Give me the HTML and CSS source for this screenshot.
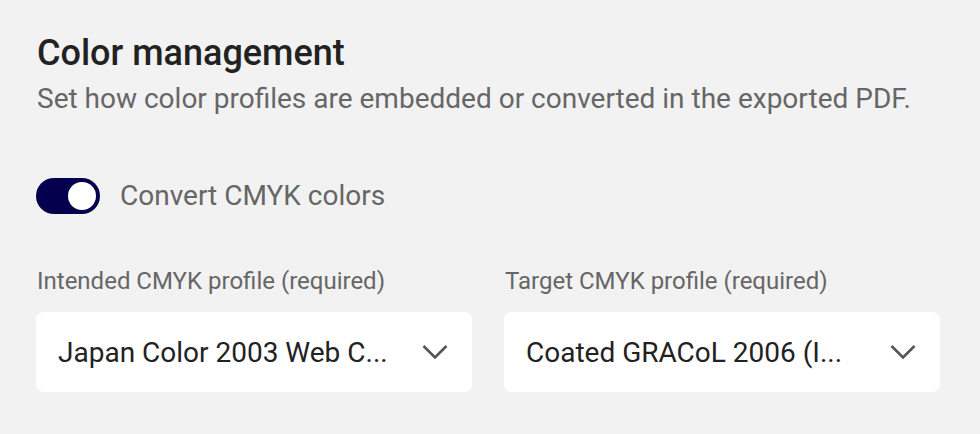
FILE: index.html
```html
<!DOCTYPE html>
<html lang="en">
<head>
<meta charset="utf-8">
<link rel="stylesheet" href="styles.css">
</head>
<body>
<main class="panel">
  <h1 class="title">Color management</h1>
  <p class="desc">Set how color profiles are embedded or converted in the exported PDF.</p>
  <div class="toggle-row">
    <span class="switch"><span class="knob"></span></span>
    <span class="toggle-label">Convert CMYK colors</span>
  </div>
  <div class="fields">
    <div class="field">
      <div class="field-label">Intended CMYK profile (required)</div>
      <div class="select">
        <span class="select-text">Japan Color 2003 Web C...</span>
        <svg class="chev" width="26" height="16" viewBox="0 0 26 16"><path d="M1.5 2 L13 13.5 L24.5 2" fill="none" stroke="#555" stroke-width="2.6"/></svg>
      </div>
    </div>
    <div class="field">
      <div class="field-label">Target CMYK profile (required)</div>
      <div class="select">
        <span class="select-text">Coated GRACoL 2006 (I...</span>
        <svg class="chev" width="26" height="16" viewBox="0 0 26 16"><path d="M1.5 2 L13 13.5 L24.5 2" fill="none" stroke="#555" stroke-width="2.6"/></svg>
      </div>
    </div>
  </div>
</main>
</body>
</html>
```

FILE: styles.css
```css
html, body {
  margin: 0;
  padding: 0;
  background: #f2f2f2;
}
body {
  font-family: Roboto, "Liberation Sans", sans-serif;
}
.panel {
  padding: 31px 40px 0 36px;
}
.title {
  margin: 0;
  font-size: 36px;
  font-weight: 500;
  line-height: 44px;
  color: #222;
  padding-left: 1px;
}
.desc {
  margin: 6px 0 0 0;
  font-size: 28px;
  line-height: 36px;
  color: #666;
  padding-left: 1px;
}
.toggle-row {
  display: flex;
  align-items: center;
  gap: 20px;
  margin-top: 61px;
}
.switch {
  width: 64px;
  height: 36px;
  border-radius: 18px;
  background: #05004e;
  display: flex;
  align-items: center;
  justify-content: flex-end;
  padding-right: 4px;
  box-sizing: border-box;
}
.knob {
  width: 28px;
  height: 28px;
  border-radius: 50%;
  background: #fff;
}
.toggle-label {
  font-size: 28px;
  color: #666;
  line-height: 36px;
}
.fields {
  display: grid;
  grid-template-columns: 1fr 1fr;
  gap: 32px;
  margin-top: 51px;
}
.field-label {
  font-size: 24px;
  line-height: 32px;
  color: #666;
  padding-left: 1px;
}
.select {
  margin-top: 15px;
  height: 80px;
  background: #fff;
  border-radius: 8px;
  display: flex;
  align-items: center;
  justify-content: space-between;
  padding: 0 24px 0 22px;
}
.select-text {
  font-size: 28px;
  color: #222;
}
.chev {
  display: block;
}
```
